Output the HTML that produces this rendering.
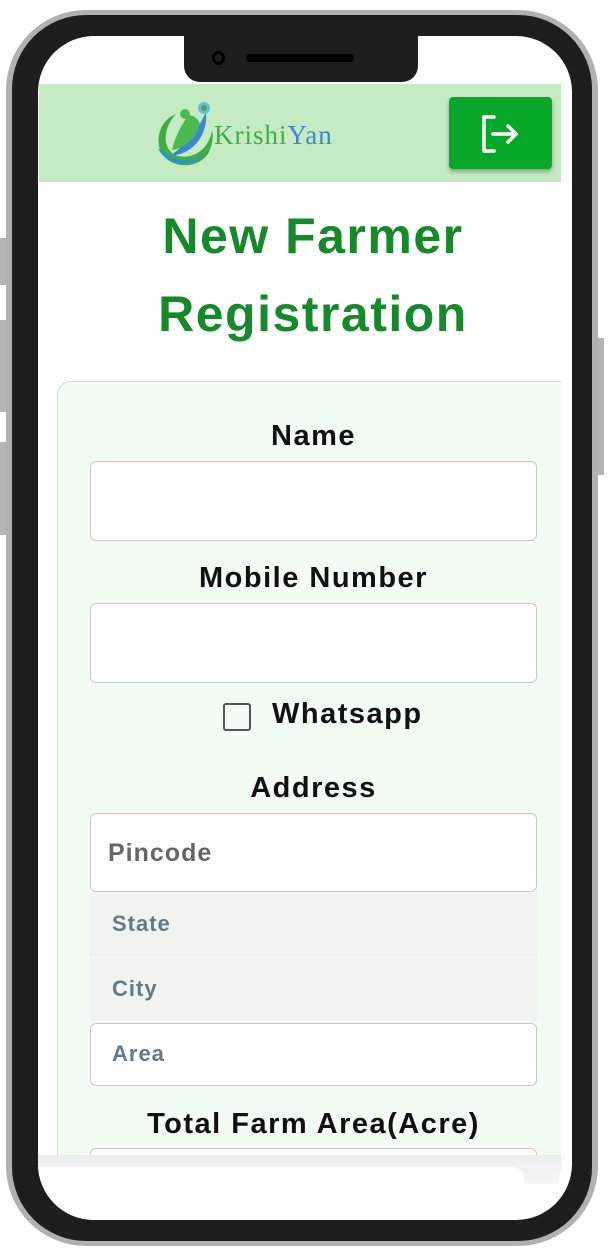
<!DOCTYPE html>
<html><head><meta charset="utf-8"><style>
*{margin:0;padding:0;box-sizing:border-box}
body{width:611px;height:1257px;background:#fff;position:relative;overflow:hidden;font-family:"Liberation Sans",sans-serif}
.btn{position:absolute;background:#b4b4b4}
.outer{position:absolute;left:6px;top:10px;width:592px;height:1236px;border-radius:80px;background:#b1b1b1}
.frame{position:absolute;left:12px;top:15px;width:580px;height:1226px;border-radius:74px;background:#1e1e1c}
.screen{position:absolute;left:38px;top:36px;width:534px;height:1184px;border-radius:56px;background:#fff}
.content{position:absolute;left:0;top:0;width:611px;height:1257px;clip-path:inset(36px 50px 37px 38px round 56px 40px 56px 56px)}
.notch{position:absolute;left:184px;top:30px;width:234px;height:52px;background:#1e1e1c;border-radius:0 0 16px 16px}
.abs{position:absolute}
.lbl{position:absolute;left:8px;width:611px;text-align:center;font-weight:bold;font-size:29px;letter-spacing:1.5px;color:#111}
.inp{position:absolute;left:90px;width:447px;background:#fff;border:1.5px solid #c8c8c8;border-radius:6px}
.ph{position:absolute;font-weight:bold;letter-spacing:1px}
</style></head><body>
<div class="btn" style="left:0;top:238px;width:7px;height:47px"></div>
<div class="btn" style="left:0;top:320px;width:7px;height:92px"></div>
<div class="btn" style="left:0;top:442px;width:7px;height:93px"></div>
<div class="btn" style="left:597px;top:338px;width:7px;height:137px"></div>
<div class="outer"></div>
<div class="frame"></div>
<div class="screen"></div>

<div class="content">
<div class="abs" style="left:39px;top:84px;width:522px;height:98px;background:#c5ebc2"></div>
<svg class="abs" style="left:152px;top:98px" width="64" height="70" viewBox="0 0 64 70">
<path d="M24 16 C8 22 2 42 10 56 C20 70 44 72 56 56 C60 48 62 40 60 32 C58 48 44 62 26 58 C12 54 8 34 24 16Z" fill="#3fae49"/>
<path d="M6 50 C14 68 40 72 56 54 C46 64 26 66 14 56Z" fill="#2f8fd6"/>
<path d="M18 58 C32 48 44 36 54 14 C56 34 44 56 18 58Z" fill="#3b86d6"/>
<path d="M20 52 C24 36 30 26 36 18 C40 16 46 20 48 26 C44 40 34 50 20 52Z" fill="#4cbb4f"/>
<circle cx="33" cy="16" r="5" fill="#4cbb4f"/>
<circle cx="52" cy="10" r="6" fill="#6ab8ea"/><circle cx="52" cy="10" r="3" fill="#3fae49"/>
</svg>
<div class="abs" style="left:214px;top:120px;font-family:'Liberation Serif',serif;font-size:27px;letter-spacing:1px;color:#3fae49">Krishi<span style="color:#3b86d6">Yan</span></div>
<div class="abs" style="left:449px;top:97px;width:103px;height:72px;background:#07a82a;border-radius:4px;box-shadow:0 3px 4px rgba(0,0,0,.3)"></div>
<svg class="abs" style="left:480px;top:114px" width="40" height="40" viewBox="0 0 40 40" fill="none" stroke="#fff" stroke-width="3.5" stroke-linecap="round" stroke-linejoin="round">
<path d="M14 3H4V37H14"/><path d="M13 20H36"/><path d="M28 12L36 20L28 28"/></svg>

<div class="abs" style="left:0;width:626px;top:197px;text-align:center;font-weight:bold;font-size:50px;line-height:78px;color:#168a2a;letter-spacing:1.5px">New Farmer<br>Registration</div>

<div class="abs" style="left:57px;top:381px;width:530px;height:800px;background:#f3fcf2;border:1.5px solid #d4d8d4;border-radius:14px"></div>

<div class="lbl" style="top:420px">Name</div>
<div class="inp" style="top:461px;height:80px"></div>
<div class="lbl" style="top:562px">Mobile Number</div>
<div class="inp" style="top:603px;height:80px"></div>
<div class="abs" style="left:223px;top:703px;width:28px;height:28px;border:2.5px solid #555;border-radius:3px"></div>
<div class="abs" style="left:272px;top:698px;font-weight:bold;font-size:29px;letter-spacing:1.5px;color:#111">Whatsapp</div>
<div class="lbl" style="top:772px">Address</div>
<div class="inp" style="top:813px;height:79px"></div>
<div class="ph" style="left:108px;top:839px;font-size:25px;color:#666">Pincode</div>
<div class="abs" style="left:90px;top:893px;width:447px;height:64px;background:#eff4ef"></div>
<div class="ph" style="left:112px;top:911px;font-size:22px;color:#647b85">State</div>
<div class="abs" style="left:90px;top:958px;width:447px;height:63px;background:#eff4ef"></div>
<div class="ph" style="left:112px;top:976px;font-size:22px;color:#647b85">City</div>
<div class="inp" style="top:1023px;height:63px"></div>
<div class="ph" style="left:112px;top:1041px;font-size:22px;color:#647b85">Area</div>
<div class="lbl" style="top:1108px">Total Farm Area(Acre)</div>
<div class="inp" style="top:1148px;height:40px"></div>

<div class="abs" style="left:36px;top:1155px;width:540px;height:30px;background:linear-gradient(#ececec,#f6f6f6)"></div>
<div class="abs" style="left:36px;top:1167px;width:488px;height:70px;background:#fff;border-radius:0 12px 0 0"></div>
<div class="abs" style="left:520px;top:1184px;width:60px;height:50px;background:#fff"></div>
</div>

<div class="notch"></div>
<div class="abs" style="left:212px;top:51px;width:13px;height:14px;border-radius:50%;border:3px solid #000"></div>
<div class="abs" style="left:246px;top:54px;width:108px;height:8px;border-radius:4px;background:#000"></div>
</body></html>
